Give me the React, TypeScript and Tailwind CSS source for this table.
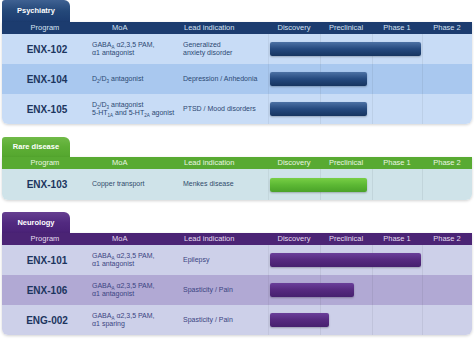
import React from 'react';

type Theme = {
  tab: string;
  tabH: string;
  header: string;
  headerText: string;
  rowA: string;
  rowB: string;
  rowH: string;
  bar: string;
  text: string;
  gap: string;
};

type Row = {
  program: string;
  moa: React.ReactNode;
  lead: React.ReactNode;
  bar: number;
  alt?: boolean;
};

const sub = (s: string) => <sub className="text-[4.5px] align-[-1px] leading-none">{s}</sub>;

const GABA = (
  <>
    GABA{sub('A')} α2,3,5 PAM,
  </>
);

const SECTIONS: { name: string; theme: Theme; rows: Row[] }[] = [
  {
    name: 'Psychiatry',
    theme: {
      tab: 'bg-gradient-to-b from-[#3f6192] via-[#244879] to-[#1c3c70]',
      tabH: 'h-[22px]',
      header: 'bg-[#1c3c6f]',
      headerText: 'text-[#d6e2f2]',
      rowA: 'bg-[#c8dcf6]',
      rowB: 'bg-[#a9c8ef]',
      rowH: 'h-[30px]',
      bar: 'bg-gradient-to-b from-[#4d72a5] via-[#25497e] to-[#173560]',
      text: 'text-[#2c4873]',
      gap: 'mt-0',
    },
    rows: [
      {
        program: 'ENX-102',
        moa: (
          <>
            {GABA}
            <br />
            α1 antagonist
          </>
        ),
        lead: (
          <>
            Generalized
            <br />
            anxiety disorder
          </>
        ),
        bar: 151,
      },
      {
        program: 'ENX-104',
        moa: (
          <>
            D{sub('2')}/D{sub('3')} antagonist
          </>
        ),
        lead: 'Depression / Anhedonia',
        bar: 97,
        alt: true,
      },
      {
        program: 'ENX-105',
        moa: (
          <>
            D{sub('2')}/D{sub('3')} antagonist
            <br />
            5-HT{sub('1A')} and 5-HT{sub('2A')} agonist
          </>
        ),
        lead: 'PTSD / Mood disorders',
        bar: 97,
      },
    ],
  },
  {
    name: 'Rare disease',
    theme: {
      tab: 'bg-gradient-to-b from-[#70ba48] via-[#5dae35] to-[#55a72f]',
      tabH: 'h-[20px]',
      header: 'bg-[#58aa32]',
      headerText: 'text-[#eaf6e2]',
      rowA: 'bg-[#cfe3e9]',
      rowB: 'bg-[#cfe3e9]',
      rowH: 'h-[31px]',
      bar: 'bg-gradient-to-b from-[#78cf45] via-[#5cb834] to-[#4aa229]',
      text: 'text-[#2f4b6c]',
      gap: 'mt-[13px]',
    },
    rows: [
      {
        program: 'ENX-103',
        moa: 'Copper transport',
        lead: 'Menkes disease',
        bar: 97,
      },
    ],
  },
  {
    name: 'Neurology',
    theme: {
      tab: 'bg-gradient-to-b from-[#663f91] via-[#522a80] to-[#4a2277]',
      tabH: 'h-[21px]',
      header: 'bg-[#4b2475]',
      headerText: 'text-[#e4dcef]',
      rowA: 'bg-[#cdd0e9]',
      rowB: 'bg-[#b1a9d4]',
      rowH: 'h-[30px]',
      bar: 'bg-gradient-to-b from-[#6a3f9a] via-[#55297f] to-[#46206e]',
      text: 'text-[#3b4482]',
      gap: 'mt-[12px]',
    },
    rows: [
      {
        program: 'ENX-101',
        moa: (
          <>
            {GABA}
            <br />
            α1 antagonist
          </>
        ),
        lead: 'Epilepsy',
        bar: 151,
      },
      {
        program: 'ENX-106',
        moa: (
          <>
            {GABA}
            <br />
            α1 antagonist
          </>
        ),
        lead: 'Spasticity / Pain',
        bar: 84,
        alt: true,
      },
      {
        program: 'ENG-002',
        moa: (
          <>
            {GABA}
            <br />
            α1 sparing
          </>
        ),
        lead: 'Spasticity / Pain',
        bar: 59,
      },
    ],
  },
];

const COLS = 'grid grid-cols-[86px_92px_88px_52px_52px_50px_50px]';
const PHASES = ['Discovery', 'Preclinical', 'Phase 1', 'Phase 2'];

const Section = ({ name, theme, rows }: { name: string; theme: Theme; rows: Row[] }) => (
  <div className={`flex flex-col ${theme.gap}`}>
    <div
      className={`w-[68px] ${theme.tabH} ${theme.tab} rounded-tl-[3px] rounded-tr-[6px] flex items-center justify-center text-white font-bold text-[7.5px]`}
    >
      {name}
    </div>
    <div className="rounded-b-[6px] overflow-hidden shadow-[0_1px_3px_rgba(0,0,0,0.18)]">
      <div className={`${COLS} h-[12px] items-center ${theme.header} ${theme.headerText} text-[7.5px] leading-none`}>
        <div className="text-center">Program</div>
        <div className="pl-[24px]">MoA</div>
        <div className="pl-[4px]">Lead indication</div>
        {PHASES.map((p) => (
          <div key={p} className="text-center">
            {p}
          </div>
        ))}
      </div>
      {rows.map((r) => (
        <div key={r.program} className={`${COLS} ${theme.rowH} ${r.alt ? theme.rowB : theme.rowA} ${theme.text}`}>
          <div className="flex items-center justify-center pl-[4px] text-[10px] font-bold text-[#1c355e]">
            {r.program}
          </div>
          <div className="flex items-center pl-[4px] text-[7px] leading-[8.5px]">
            <div>{r.moa}</div>
          </div>
          <div className="flex items-center pl-[3px] text-[7px] leading-[8.5px]">
            <div>{r.lead}</div>
          </div>
          <div className="col-span-4 grid grid-cols-[52px_52px_50px_50px] grid-rows-1">
            <div className="col-start-1 row-start-1 border-l border-black/[0.05]" />
            <div className="col-start-2 row-start-1 border-l border-black/[0.06]" />
            <div className="col-start-3 row-start-1 border-l border-black/[0.06]" />
            <div className="col-start-4 row-start-1 border-l border-black/[0.06]" />
            <div
              className={`col-start-1 col-span-4 row-start-1 self-center ml-[2px] h-[14px] rounded-[2px] ${theme.bar} shadow-[0_1px_2px_rgba(0,0,0,0.25)]`}
              style={{ width: r.bar }}
            />
          </div>
        </div>
      ))}
    </div>
  </div>
);

export default function App() {
  return (
    <div className="w-[474px] h-[340px] bg-white px-[2px] font-['Liberation_Sans',Arial,sans-serif] overflow-hidden">
      {SECTIONS.map((s) => (
        <Section key={s.name} {...s} />
      ))}
    </div>
  );
}
